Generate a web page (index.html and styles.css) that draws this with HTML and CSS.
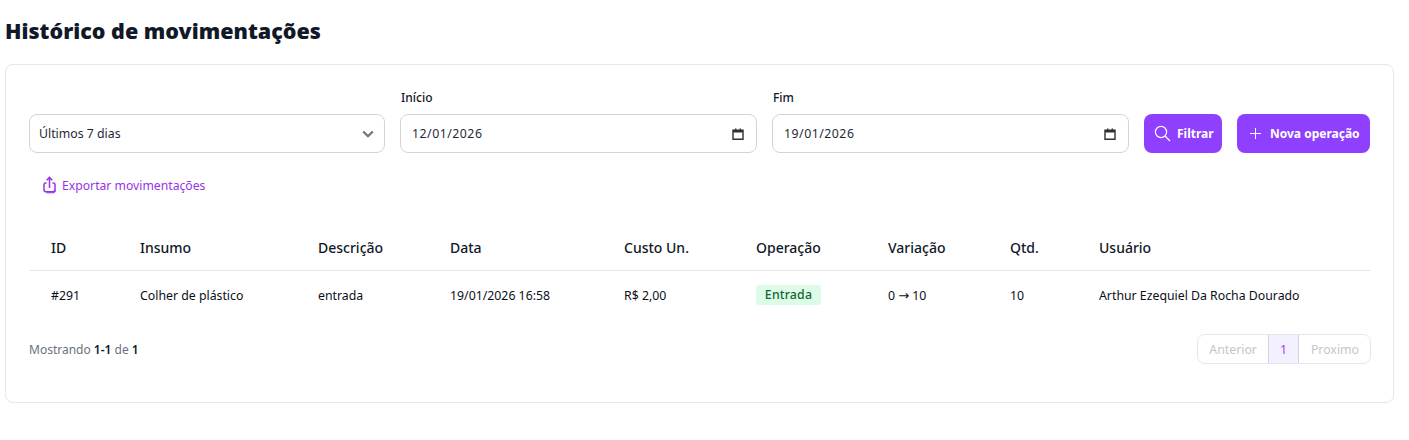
FILE: index.html
```html
<!DOCTYPE html>
<html lang="pt-BR">
<head>
<meta charset="utf-8">
<title>Histórico de movimentações</title>
<link rel="stylesheet" href="styles.css">
</head>
<body>
<h1 class="title">Histórico de movimentações</h1>
<section class="card">
  <div class="filters">
    <div class="field">
      <div class="control">
        <span>Últimos 7 dias</span>
        <svg class="chev" width="12" height="8" viewBox="0 0 12 8"><path d="M1.200 1.500 6 6.200l4.800-4.700" fill="none" stroke="#6b7280" stroke-width="2.200"/></svg>
      </div>
    </div>
    <div class="field">
      <label class="label">Início</label>
      <div class="control date">
        <span>12/01/2026</span>
        <svg class="cal" width="12" height="12" viewBox="0 0 12 12"><path d="M1 2.200h10v9H1z" fill="none" stroke="#303030" stroke-width="1.400"/><path d="M1 2h10v2.600H1zM3 .5h1.400V2H3zM7.600.5H9V2H7.600z" fill="#303030"/></svg>
      </div>
    </div>
    <div class="field">
      <label class="label">Fim</label>
      <div class="control date">
        <span>19/01/2026</span>
        <svg class="cal" width="12" height="12" viewBox="0 0 12 12"><path d="M1 2.200h10v9H1z" fill="none" stroke="#303030" stroke-width="1.400"/><path d="M1 2h10v2.600H1zM3 .5h1.400V2H3zM7.600.5H9V2H7.600z" fill="#303030"/></svg>
      </div>
    </div>
    <button class="btn btn-filter">
      <svg width="17" height="17" viewBox="0 0 17 17"><circle cx="7" cy="7" r="5.600" fill="none" stroke="#fff" stroke-width="1.200"/><path d="m11 11 5 5" stroke="#fff" stroke-width="1.200"/></svg>
      Filtrar
    </button>
    <button class="btn btn-new">
      <svg width="11" height="11" viewBox="0 0 11 11"><path d="M5.500 0v11M0 5.500h11" stroke="#fff" stroke-width="1"/></svg>
      Nova operação
    </button>
  </div>
  <a class="export">
    <svg width="15" height="18" viewBox="0 0 15 18"><path d="M4.500 7H3.600C2.700 7 2 7.700 2 8.600v4.800C2 14.800 3 15.800 4.400 15.800h6.200c1.400 0 2.400-1 2.400-2.400V8.600C13 7.700 12.300 7 11.400 7h-.9" fill="none" stroke="#9333ea" stroke-width="1.500"/><path d="M4.500 16.800h6.500c1.500 0 2.600-1 2.600-2.500" fill="none" stroke="#9333ea" stroke-width="1"/><path d="M7.500 12V1.500M4.700 4.200 7.500 1.400l2.800 2.800" fill="none" stroke="#9333ea" stroke-width="1.500"/></svg>
    Exportar movimentações
  </a>
  <table class="table">
    <thead>
      <tr>
        <th class="c-id">ID</th>
        <th class="c-insumo">Insumo</th>
        <th class="c-desc">Descrição</th>
        <th class="c-data">Data</th>
        <th class="c-custo">Custo Un.</th>
        <th class="c-op">Operação</th>
        <th class="c-var">Variação</th>
        <th class="c-qtd">Qtd.</th>
        <th>Usuário</th>
      </tr>
    </thead>
    <tbody>
      <tr>
        <td>#291</td>
        <td>Colher de plástico</td>
        <td>entrada</td>
        <td>19/01/2026 16:58</td>
        <td>R$ 2,00</td>
        <td><span class="badge">Entrada</span></td>
        <td>0 <span class="arrow">→</span> 10</td>
        <td>10</td>
        <td>Arthur Ezequiel Da Rocha Dourado</td>
      </tr>
    </tbody>
  </table>
  <div class="foot">
    <p class="showing">Mostrando <b>1-1</b> de <b>1</b></p>
    <nav class="pager">
      <span class="pg">Anterior</span>
      <span class="pg current">1</span>
      <span class="pg pg-next">Proximo</span>
    </nav>
  </div>
</section>
</body>
</html>
```
FILE: styles.css
```css
* { box-sizing: border-box; }
html, body { margin: 0; padding: 0; background: #fff; }
body {
  padding: 0 15px 0 5px;
  font-family: "Noto Sans", "Open Sans", sans-serif;
  font-size: 12.3px;
  color: #0b0f19;
}
.title {
  margin: 0;
  height: 64px;
  padding-top: 16px;
  font-size: 21.5px;
  line-height: 30px;
  font-weight: 900;
  color: #111827;
}
.card {
  height: 339px;
  border: 1px solid #e5e7eb;
  border-radius: 8px;
  padding: 23px 22px 0 23px;
}
.filters { display: flex; align-items: flex-end; gap: 15px; padding-top: 1px; margin-right: 1px; }
.field { flex: 1 1 0; min-width: 0; }
.field:first-child { flex: 0 0 356px; }
.label {
  display: block;
  font-size: 12px;
  line-height: 18px;
  margin-bottom: 7px;
  padding-left: 1px;
  font-weight: 500;
  color: #111827;
}
.control {
  height: 39px;
  border: 1px solid #d1d5db;
  border-radius: 8px;
  padding: 0 9px;
  display: flex;
  align-items: center;
  justify-content: space-between;
  background: #fff;
  color: #1f2937;
}
.chev { margin-right: 1px; }
.date { padding-right: 12px; padding-left: 11px; letter-spacing: .5px; }
.btn {
  height: 39px;
  border: 0;
  border-radius: 8px;
  background: #8f3ffe;
  color: #fff;
  font: 700 12px "Noto Sans", sans-serif;
  display: flex;
  align-items: center;
  flex: none;
  padding: 0;
}
.btn-filter { width: 78px; padding-left: 10px; gap: 6px; }
.btn-new { width: 133px; padding-left: 13px; gap: 9px; }
.export {
  display: flex;
  align-items: center;
  gap: 5px;
  margin: 22px 0 0 13px;
  height: 20px;
  font-size: 12.2px;
  color: #9333ea;
}
.table {
  width: 1342px;
  margin-top: 29px;
  border-collapse: collapse;
  table-layout: fixed;
}
.table th {
  height: 46px;
  padding: 2px 0 0 22px;
  text-align: left;
  font-size: 14px;
  font-weight: 500;
  color: #111827;
  border-bottom: 1px solid #e5e7eb;
}
.c-id { width: 89px; }
.c-insumo { width: 178px; }
.c-desc { width: 132px; }
.c-data { width: 174px; }
.c-custo { width: 132px; }
.c-op { width: 132px; }
.c-var { width: 122px; }
.c-qtd { width: 89px; }
.table td {
  height: 50px;
  padding: 0 0 0 22px;
  white-space: nowrap;
}
.arrow { font-family: "DejaVu Sans", sans-serif; font-size: 13px; }
.badge {
  display: inline-block;
  width: 65px;
  height: 20px;
  border-radius: 3px;
  background: #dcfce7;
  color: #166534;
  font-weight: 500;
  letter-spacing: .2px;
  line-height: 20px;
  text-align: center;
}
.foot {
  display: flex;
  justify-content: space-between;
  align-items: center;
  margin-top: 14px;
}
.showing { margin: 0; font-size: 12px; color: #6b7280; }
.showing b { font-weight: 600; color: #111827; }
.pager {
  display: flex;
  height: 30px;
  border: 1px solid #e5e7eb;
  border-radius: 8px;
  overflow: hidden;
  color: #c4c6cc;
}
.pg { display: flex; align-items: center; padding: 0 11px; }
.pg-next { padding-left: 12px; }
.current {
  width: 31px;
  justify-content: center;
  padding: 0;
  background: #f3f0ff;
  color: #8f3ffe;
  border-left: 1px solid #d1d5db;
  border-right: 1px solid #d1d5db;
}
```
